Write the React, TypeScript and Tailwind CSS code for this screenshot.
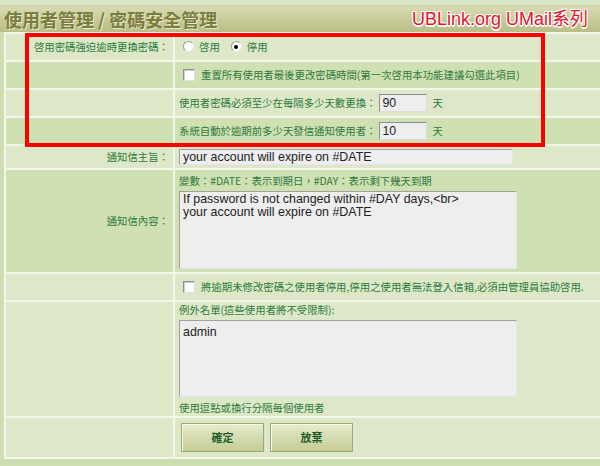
import React from "react";

const cjk = "font-['Noto_Sans_CJK_TC','Noto_Sans',sans-serif]";

function Radio({ checked }: { checked?: boolean }) {
  return (
    <span className="inline-flex h-[11px] w-[11px] items-center justify-center rounded-full border border-t-[#9a9a9a] border-l-[#9a9a9a] border-r-[#e8e8e8] border-b-[#e8e8e8] bg-white">
      {checked && <span className="h-[4px] w-[4px] rounded-full bg-black" />}
    </span>
  );
}

function Checkbox() {
  return (
    <span className="inline-block h-[12px] w-[12px] shrink-0 border border-t-[#8e8e8e] border-l-[#8e8e8e] border-r-[#e2e2e2] border-b-[#e2e2e2] bg-white shadow-[inset_1px_1px_0_#cfcfcf]" />
  );
}

function Row({
  label,
  dark,
  className,
  children,
}: {
  label?: string;
  dark?: boolean;
  className?: string;
  children: React.ReactNode;
}) {
  const bg = dark ? "bg-[#cfe0b3]" : "bg-[#dde8c8]";
  return (
    <div className={`grid grid-cols-[167px_1fr] gap-[2px] ${className ?? ""}`}>
      <div className={`${bg} flex items-center justify-end pr-[4px] text-[#2f7a3c]`}>{label}</div>
      <div className={`${bg} flex flex-col justify-center pl-[4px] text-[#2f7a3c]`}>{children}</div>
    </div>
  );
}

function SmallInput({ value }: { value: string }) {
  return (
    <span className="mx-[3px] inline-flex h-[18px] w-[48px] items-center border border-t-[#8d8d8d] border-l-[#8d8d8d] border-r-[#dcdcdc] border-b-[#dcdcdc] bg-[#eeeeee] pl-[2px] font-['Liberation_Sans',sans-serif] text-[12.4px] text-[#222]">
      {value}
    </span>
  );
}

export default function App() {
  return (
    <div className={`relative h-[466px] w-[600px] overflow-hidden bg-[#cddfb0] ${cjk} text-[10.4px]`}>
      <div className="h-[6px] border-b border-[#c4d3a8] bg-[#dbe6c6]" />
      <div className="flex h-[26px] items-center justify-between bg-gradient-to-b from-[#d9dbb4] via-[#c9cc9a] to-[#b9bd86] pl-[4px] pr-[12px]">
        <span className="text-[18px] font-bold text-[#7c7c3e] [text-shadow:1px_1px_0_#e6e8cc]">
          使用者管理 / 密碼安全管理
        </span>
        <span className="font-['Liberation_Sans','Noto_Sans_CJK_TC',sans-serif] text-[18px] text-[#e3142c] [text-shadow:-1px_-1px_0_#fff,1px_-1px_0_#fff,-1px_1px_0_#fff,1px_1px_0_#fff,0_2px_0_#fff]">
          UBLink.org UMail系列
        </span>
      </div>

      <div className="ml-[4px] flex flex-col gap-[2px] border-y-2 border-l-2 border-[#f3f7ea] bg-[#f3f7ea]">
        <Row label="啓用密碼強迫逾時更換密碼：" className="h-[26px]">
          <div className="flex items-center gap-[5px] pl-[4px]">
            <Radio />
            <span className="mr-[6px]">啓用</span>
            <Radio checked />
            <span>停用</span>
          </div>
        </Row>
        <Row dark className="h-[26px]">
          <div className="flex items-center gap-[6px] pl-[4px]">
            <Checkbox />
            <span>重置所有使用者最後更改密碼時間(第一次啓用本功能建議勾選此項目)</span>
          </div>
        </Row>
        <Row className="h-[26px]">
          <div className="flex items-center">
            <span>使用者密碼必須至少在每隔多少天數更換：</span>
            <SmallInput value="90" />
            <span className="ml-[2px]">天</span>
          </div>
        </Row>
        <Row dark className="h-[26px]">
          <div className="flex items-center">
            <span>系統自動於逾期前多少天發信通知使用者：</span>
            <SmallInput value="10" />
            <span className="ml-[2px]">天</span>
          </div>
        </Row>
        <Row label="通知信主旨：" className="h-[22px]">
          <div className="flex h-[16px] w-[334px] items-center border border-t-[#a0a0a0] border-l-[#a0a0a0] border-r-[#e6e6e6] border-b-[#e6e6e6] bg-[#eeeeee] pl-[3px] font-['Liberation_Sans',sans-serif] text-[12.4px] text-[#222]">
            your account will expire on #DATE
          </div>
        </Row>
        <Row label="通知信內容：" dark className="h-[102px]">
          <div className="mb-[2px]">變數：#DATE：表示到期日，#DAY：表示剩下幾天到期</div>
          <div className="h-[78px] w-[338px] border border-t-[#a0a0a0] border-l-[#a0a0a0] border-r-[#e6e6e6] border-b-[#e6e6e6] bg-[#eeeeee] px-[3px] pt-[1px] font-['Liberation_Sans',sans-serif] text-[12.4px] leading-[13px] text-[#222]">
            If password is not changed within #DAY days,&lt;br&gt;
            <br />
            your account will expire on #DATE
          </div>
        </Row>
        <Row className="h-[26px]">
          <div className="flex items-center gap-[6px] pl-[4px]">
            <Checkbox />
            <span>將逾期未修改密碼之使用者停用,停用之使用者無法登入信箱,必須由管理員協助啓用.</span>
          </div>
        </Row>
        <Row className="h-[114px]">
          <div className="mb-[2px]">例外名單(這些使用者將不受限制):</div>
          <div className="h-[77px] w-[338px] border border-t-[#a0a0a0] border-l-[#a0a0a0] border-r-[#e6e6e6] border-b-[#e6e6e6] bg-[#eeeeee] px-[3px] pt-[2px] font-['Liberation_Sans',sans-serif] text-[12.4px] text-[#222]">
            admin
          </div>
          <div className="mt-[3px]">使用逗點或換行分隔每個使用者</div>
        </Row>
        <Row className="h-[39px]">
          <div className="flex gap-[6px] pl-[2px]">
            {["確定", "放棄"].map((t) => (
              <button
                key={t}
                className="h-[29px] w-[83px] border border-[#9ea67a] bg-gradient-to-b from-[#e6ebcc] to-[#c4cc95] text-[11px] font-bold text-[#1f5e2a] shadow-[inset_1px_1px_0_#f6f8ea]"
              >
                {t}
              </button>
            ))}
          </div>
        </Row>
      </div>

      <div className="absolute left-[25px] top-[33px] h-[114px] w-[520px] border-[4px] border-[#ff0000]" />
    </div>
  );
}
